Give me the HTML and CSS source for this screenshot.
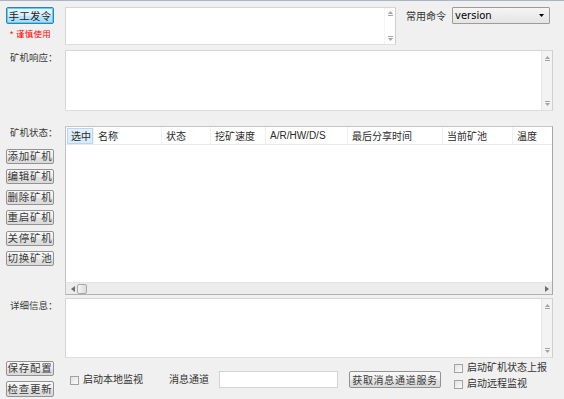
FILE: index.html
```html
<!DOCTYPE html>
<html>
<head>
<meta charset="utf-8">
<link rel="stylesheet" href="styles.css">
</head>
<body>
<div class="win">
  <!-- row 1 -->
  <div class="side s1">
    <button class="btn primary">手工发令</button>
    <div class="warn">* 谨慎使用</div>
  </div>
  <div class="main m1">
    <div class="box cmd">
      <div class="area"></div>
      <div class="vsb light">
        <svg class="arr" viewBox="0 0 7 5"><polygon points="3.5,0 6,3 1,3"/><rect x="1" y="4" width="5" height="1"/></svg>
        <svg class="arr" viewBox="0 0 7 5"><rect x="1" y="0" width="5" height="1"/><polygon points="1,2 6,2 3.5,5"/></svg>
      </div>
    </div>
    <span class="lbl-cmd">常用命令</span>
    <div class="select"><span>version</span><svg class="caret" viewBox="0 0 5 3"><polygon points="0,0 5,0 2.5,3"/></svg></div>
  </div>

  <!-- row 2 -->
  <div class="side s2"><span class="lbl">矿机响应：</span></div>
  <div class="main m2">
    <div class="box resp">
      <div class="area"></div>
      <div class="vsb">
        <svg class="arr" viewBox="0 0 7 5"><polygon points="3.5,0 6,3 1,3"/><rect x="1" y="4" width="5" height="1"/></svg>
        <svg class="arr" viewBox="0 0 7 5"><rect x="1" y="0" width="5" height="1"/><polygon points="1,2 6,2 3.5,5"/></svg>
      </div>
    </div>
  </div>

  <!-- row 3 -->
  <div class="side s3">
    <span class="lbl">矿机状态：</span>
    <div class="btn-col">
      <button class="btn sm">添加矿机</button>
      <button class="btn sm">编辑矿机</button>
      <button class="btn sm">删除矿机</button>
      <button class="btn sm">重启矿机</button>
      <button class="btn sm">关停矿机</button>
      <button class="btn sm">切换矿池</button>
    </div>
  </div>
  <div class="main m3">
    <div class="grid">
      <div class="head">
        <div class="hc c1"><span class="hot">选中</span></div>
        <div class="hc c2">名称</div>
        <div class="hc c3">状态</div>
        <div class="hc c4">挖矿速度</div>
        <div class="hc c5">A/R/HW/D/S</div>
        <div class="hc c6">最后分享时间</div>
        <div class="hc c7">当前矿池</div>
        <div class="hc c8">温度</div>
      </div>
      <div class="body"></div>
      <div class="hsb">
        <svg class="harr" viewBox="0 0 4 6"><polygon points="4,0 4,6 0,3"/></svg>
        <span class="thumb"></span>
        <span class="track"></span>
        <svg class="harr" viewBox="0 0 4 6"><polygon points="0,0 4,3 0,6"/></svg>
      </div>
    </div>
  </div>

  <!-- row 4 -->
  <div class="side s4"><span class="lbl">详细信息：</span></div>
  <div class="main m4">
    <div class="box detail">
      <div class="area"></div>
      <div class="vsb">
        <svg class="arr" viewBox="0 0 7 5"><polygon points="3.5,0 6,3 1,3"/><rect x="1" y="4" width="5" height="1"/></svg>
        <svg class="arr" viewBox="0 0 7 5"><rect x="1" y="0" width="5" height="1"/><polygon points="1,2 6,2 3.5,5"/></svg>
      </div>
    </div>
  </div>

  <!-- row 5 -->
  <div class="side s5">
    <button class="btn sm">保存配置</button>
    <button class="btn sm tall">检查更新</button>
  </div>
  <div class="main m5">
    <label class="chk local"><span class="box9"></span>启动本地监视</label>
    <span class="lbl-ch">消息通道</span>
    <div class="input"></div>
    <button class="btn fetch">获取消息通道服务</button>
    <div class="chk-col">
      <label class="chk"><span class="box9"></span>启动矿机状态上报</label>
      <label class="chk"><span class="box9"></span>启动远程监视</label>
    </div>
  </div>
</div>
</body>
</html>
```

FILE: styles.css
```css
* { box-sizing: border-box; }
html, body { margin: 0; padding: 0; }
body {
  background: #f0f0f0;
  border-top: 1px solid #a9b6c6;
  width: 564px;
  height: 399px;
  overflow: hidden;
  font-family: "Liberation Sans", "Noto Sans CJK SC", sans-serif;
  font-size: 10px;
  color: #333;
}
.win {
  display: grid;
  grid-template-columns: 65px 488px;
  padding-top: 6px;
}
.side { display: flex; flex-direction: column; }
.main { display: flex; }

/* buttons */
.btn {
  font-family: "Liberation Sans", "Noto Sans CJK SC", sans-serif;
  color: #3a3a3a;
  padding: 0;
  margin: 0;
  border: 1px solid #929292;
  border-radius: 2px;
  background: linear-gradient(#f8f8f8, #eeeeee 50%, #e2e2e2 51%, #dadada);
  display: flex;
  align-items: center;
  justify-content: center;
  white-space: nowrap;
}
.primary {
  margin-left: 6px;
  width: 48px;
  height: 17px;
  font-size: 10.5px;
  letter-spacing: 0.3px;
  color: #222;
  border-color: #3c7fb1;
  box-shadow: inset 0 0 0 1px #4fd3fb;
  background: linear-gradient(#eaf6fd, #d9f0fc 50%, #bee6fd 51%, #a7d9f5);
}
.warn {
  margin-top: 5px;
  margin-left: 10px;
  color: #f00;
  font-size: 8.5px;
  line-height: 10px;
  letter-spacing: 0.2px;
}
.sm {
  margin-left: 6px;
  width: 48px;
  height: 15px;
  font-size: 10.5px;
  letter-spacing: 0.7px;
  line-height: 13px;
}
.tall { height: 16px; }

.lbl {
  padding-left: 10px;
  font-size: 9.5px;
  line-height: 12px;
  color: #3a3a3a;
}

/* text boxes */
.box {
  display: flex;
  background: #fff;
  border: 1px solid #d6d6d6;
  border-right-color: #cfcfcf;
  border-bottom-color: #dedede;
}
.area { flex: 1; }
.vsb {
  width: 11px;
  background: #f3f3f3;
  border-left: 1px solid #e6e6e6;
  display: flex;
  flex-direction: column;
  justify-content: space-between;
  align-items: center;
  padding: 5px 0 4px;
}
.vsb.light { background: #fff; border-left: 1px solid #f4f4f4; padding: 3px 0 3px; }
.arr { width: 7px; height: 5px; fill: #a4a4a4; }

/* row 1 */
.s1 { height: 38px; }
.m1 { height: 38px; align-items: flex-start; }
.cmd { width: 331px; height: 38px; }
.lbl-cmd {
  margin-left: 10px;
  margin-top: 4px;
  line-height: 12px;
  font-size: 10px;
  color: #333;
}
.select {
  margin-left: 6px;
  width: 98px;
  height: 17px;
  border: 1px solid #9c9c9c;
  border-radius: 1px;
  background: linear-gradient(#f5f5f5, #e4e4e4);
  display: flex;
  align-items: center;
  justify-content: space-between;
  padding: 0 5px 0 2px;
  font-family: "DejaVu Sans", sans-serif;
  font-size: 10px;
  color: #000;
}
.caret { width: 5px; height: 3px; fill: #000; }

/* row 2 */
.s2, .m2 { margin-top: 5px; }
.s2 { padding-top: 2px; }
.resp { width: 488px; height: 61px; }

/* row 3 */
.s3, .m3 { margin-top: 15px; }
.s3 { padding-top: 1px; }
.btn-col {
  display: flex;
  flex-direction: column;
  gap: 5.4px;
  margin-top: 10px;
}
.grid {
  width: 488px;
  height: 169px;
  background: #fff;
  border: 1px solid #c4c4c4;
  border-right-color: #a6a6a6;
  border-bottom-color: #b0b0b0;
  display: flex;
  flex-direction: column;
}
.head {
  display: flex;
  height: 18px;
  border-bottom: 1px solid #e8e8e8;
  font-size: 10px;
  color: #2a2a2a;
}
.hc {
  padding-left: 4px;
  border-right: 1px solid #f0f0f0;
  display: flex;
  align-items: center;
  white-space: nowrap;
  overflow: hidden;
}
.c1 { width: 28px; padding-left: 1px; }
.c2 { width: 68px; }
.c3 { width: 49px; }
.c4 { width: 55px; }
.c5 { width: 82px; }
.c6 { width: 95px; }
.c7 { width: 70px; }
.c8 { flex: 1; border-right: 0; }
.hot {
  display: flex;
  align-items: center;
  height: 16px;
  width: 26px;
  padding-left: 3px;
  background: linear-gradient(#e3f1fc, #d8ebfb);
  border: 1px solid #b7d7f2;
}
.body { flex: 1; }
.hsb {
  height: 12px;
  margin-bottom: 0;
  background: #ececec;
  border-top: 1px solid #e4e4e4;
  display: flex;
  align-items: center;
  padding: 0 3px 0 5px;
}
.harr { width: 4px; height: 6px; fill: #6e6e6e; }
.thumb {
  margin-left: 2px;
  width: 10px;
  height: 10px;
  border: 1px solid #a8a8a8;
  border-radius: 2px;
  background: linear-gradient(90deg, #f4f4f4, #dcdcdc);
}
.track { flex: 1; }

/* row 4 */
.s4, .m4 { margin-top: 3px; }
.s4 { padding-top: 2px; }
.detail { width: 488px; height: 60px; }

/* row 5 */
.s5, .m5 { margin-top: 3px; }
.s5 { gap: 5px; }
.m5 { align-items: flex-start; height: 36px; }
.chk {
  display: flex;
  align-items: center;
  gap: 4px;
  font-size: 10px;
  line-height: 14px;
  color: #333;
  white-space: nowrap;
}
.box9 {
  width: 9px;
  height: 9px;
  border: 1px solid #a2a2a2;
  background: linear-gradient(135deg, #e2e2e2, #fbfbfb);
}
.local { margin-left: 5px; margin-top: 12px; }
.lbl-ch {
  margin-left: 26px;
  margin-top: 12px;
  line-height: 14px;
  font-size: 10px;
  color: #333;
}
.input {
  margin-left: 10px;
  margin-top: 10px;
  width: 119px;
  height: 17px;
  background: #fff;
  border: 1px solid #d4d4d4;
}
.fetch {
  margin-left: 11px;
  margin-top: 10px;
  width: 92px;
  height: 17px;
  font-size: 10px;
  letter-spacing: 0.7px;
}
.chk-col {
  margin-left: 13px;
  display: flex;
  flex-direction: column;
  gap: 2px;
  margin-top: 0;
}
```
